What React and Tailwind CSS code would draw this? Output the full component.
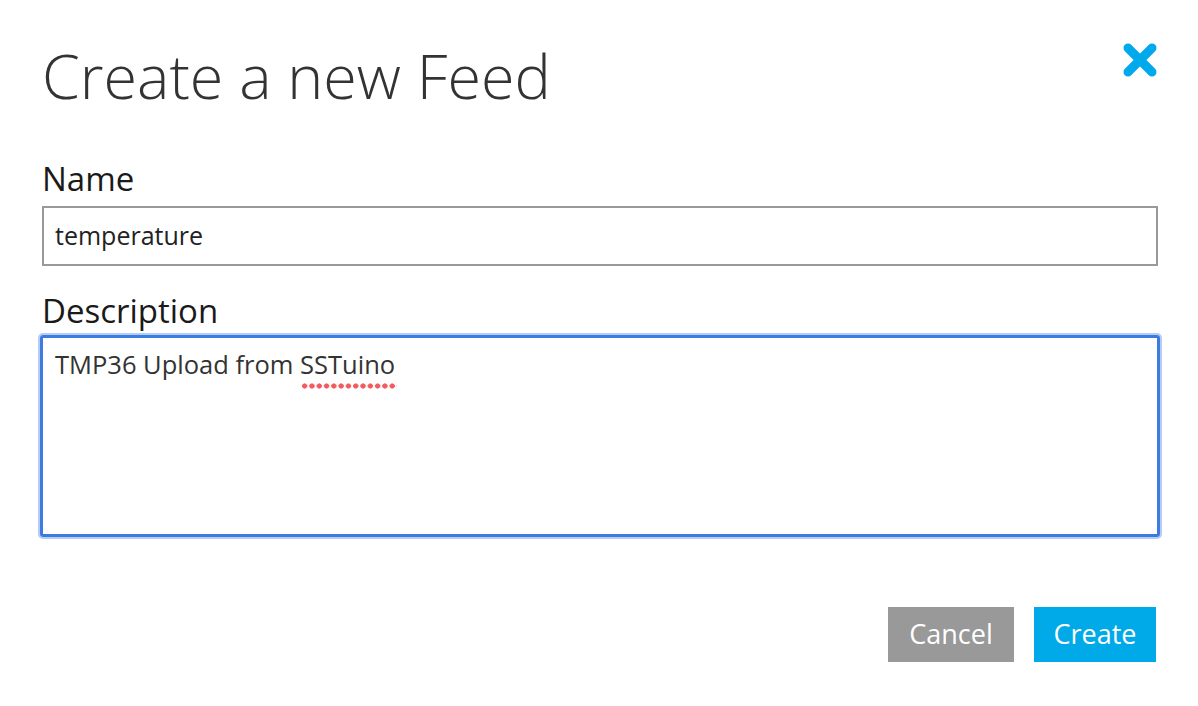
export default function App() {
  return (
    <div className="min-h-[706px] w-[1198px] bg-white font-['Open_Sans','Lato',sans-serif] text-[#333]">
      <div className="px-[42px] pt-[38px]">
        <div className="flex items-start justify-between">
          <h1 className="text-[61px] font-light leading-[76px] text-[#333]">Create a new Feed</h1>
          <button type="button" className="mr-[-2px] mt-[4px] text-[#00a9ec]" aria-label="Close">
            <svg width="36" height="36" viewBox="0 0 36 36">
              <path d="M6 6 L30 30 M30 6 L6 30" stroke="currentColor" strokeWidth="9" strokeLinecap="round" />
            </svg>
          </button>
        </div>

        <label className="mt-[44px] block text-[33px] leading-[42px] text-[#1a1a1a]">Name</label>
        <div className="mt-[6px] flex h-[60px] w-[1116px] items-center border-2 border-[#999] px-[11px] text-[25px] text-[#222]">
          temperature
        </div>

        <label className="mt-[24px] block text-[33px] leading-[42px] text-[#1a1a1a]">Description</label>
        <div className="ml-[-2px] mt-[3px] h-[202px] w-[1120px] rounded-[3px] border-[3px] border-[#3e7be0] px-[12px] pt-[9px] text-[25.5px] leading-[34px] text-[#333] shadow-[0_0_0_2px_#b5cdf6]">
          TMP36 Upload from{' '}
          <span className="relative">
            SSTuino
            <span className="absolute bottom-[-8px] left-[1px] right-[-2px] h-[6px] bg-[radial-gradient(circle,#f25a5e_2.3px,transparent_2.9px)] bg-[length:7.3px_6px] bg-repeat-x" />
          </span>
        </div>

        <div className="mt-[70px] flex justify-end gap-[20px]">
          <button type="button" className="h-[55px] w-[126px] bg-[#999] text-[27px] text-white">Cancel</button>
          <button type="button" className="h-[55px] w-[122px] bg-[#00a9e8] text-[27px] text-white">Create</button>
        </div>
      </div>
    </div>
  );
}
